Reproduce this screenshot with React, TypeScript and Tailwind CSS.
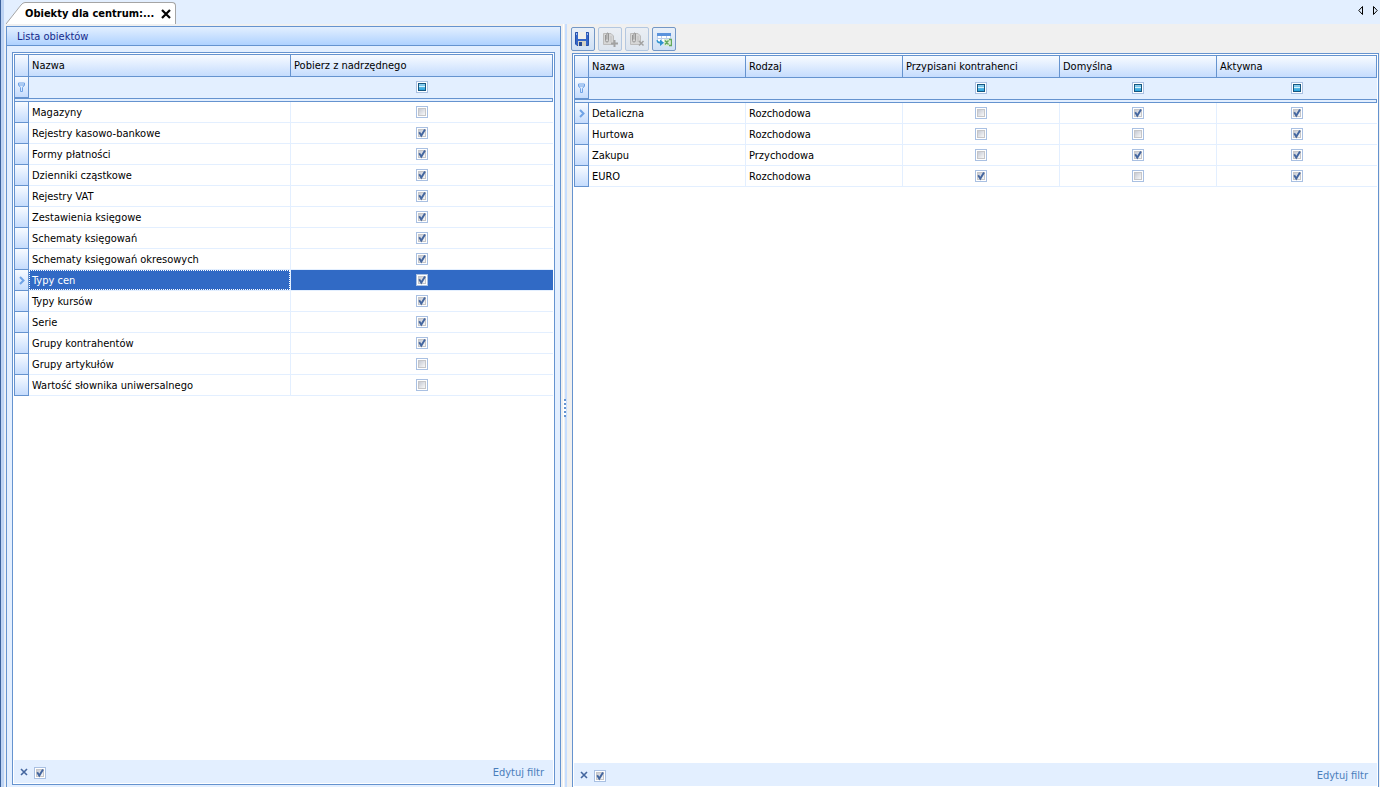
import React, { useState } from 'react';

type CellValue = string | boolean;

interface Column {
    title: string;
    width: string; // Tailwind width class, empty = share what is left
    filter?: boolean;
}

interface GridProps {
    name: string;
    columns: Column[];
    rows: CellValue[][];
    current: number;
    highlight?: boolean;
    className: string;
}

const OBJECT_COLUMNS: Column[] = [
    { title: 'Nazwa', width: '' },
    { title: 'Pobierz z nadrzędnego', width: '', filter: true },
];

const OBJECT_ROWS: CellValue[][] = [
    ['Magazyny', false],
    ['Rejestry kasowo-bankowe', true],
    ['Formy płatności', true],
    ['Dzienniki cząstkowe', true],
    ['Rejestry VAT', true],
    ['Zestawienia księgowe', true],
    ['Schematy księgowań', true],
    ['Schematy księgowań okresowych', true],
    ['Typy cen', true],
    ['Typy kursów', true],
    ['Serie', true],
    ['Grupy kontrahentów', true],
    ['Grupy artykułów', false],
    ['Wartość słownika uniwersalnego', false],
];

const PRICE_COLUMNS: Column[] = [
    { title: 'Nazwa', width: 'w-[157px]' },
    { title: 'Rodzaj', width: 'w-[157px]' },
    { title: 'Przypisani kontrahenci', width: 'w-[157px]', filter: true },
    { title: 'Domyślna', width: 'w-[157px]', filter: true },
    { title: 'Aktywna', width: '', filter: true },
];

const PRICE_ROWS: CellValue[][] = [
    ['Detaliczna', 'Rozchodowa', false, true, true],
    ['Hurtowa', 'Rozchodowa', false, false, true],
    ['Zakupu', 'Przychodowa', false, true, true],
    ['EURO', 'Rozchodowa', true, false, true],
];

const CheckBox: React.FC<{ label: string; initial?: boolean; mixed?: boolean }> = ({ label, initial = false, mixed = false }) => {
    const [checked, setChecked] = useState(initial);
    return (
        <span className="relative block size-3">
            <input
                type="checkbox"
                aria-label={label}
                checked={checked}
                onChange={e => setChecked(e.target.checked)}
                className="block size-3 appearance-none border border-[#a9c0e2] bg-white"
            />
            <svg viewBox="0 0 12 12" className="pointer-events-none absolute inset-0 size-3" shapeRendering="crispEdges">
                <defs>
                    <linearGradient id="boxFace" x1="0" y1="0" x2="1" y2="1">
                        <stop offset="0" stopColor="#c6cad4" />
                        <stop offset="1" stopColor="#f8f8f8" />
                    </linearGradient>
                    <linearGradient id="mixedFace" x1="0" y1="0" x2="0" y2="1">
                        <stop offset="0" stopColor="#8fd0f0" />
                        <stop offset="1" stopColor="#2aa4dc" />
                    </linearGradient>
                </defs>
                {mixed ? (
                    <>
                        <rect x="2" y="2" width="8" height="8" fill="#17567f" />
                        <rect x="3" y="3" width="6" height="6" fill="url(#mixedFace)" />
                        <rect x="3" y="5" width="6" height="1" fill="#d8f2fc" />
                    </>
                ) : (
                    <>
                        <rect x="2" y="2" width="8" height="8" fill="#c6c6c8" />
                        <rect x="3" y="3" width="6" height="6" fill="url(#boxFace)" />
                    </>
                )}
                {!mixed && checked && (
                    <path d="M3.2 5.2 L5.3 8.6 L9 2.6" fill="none" stroke="#44669f" strokeWidth="1.9" shapeRendering="auto" />
                )}
            </svg>
        </span>
    );
};

const Funnel = () => (
    <svg viewBox="0 0 9 10" className="mx-auto block h-[10px] w-[9px]" fill="none" stroke="#6fa3e6">
        <path d="M1.5 1 H7.5 V3 H1.5 Z M1.5 3 L3.5 5.5 V9.5 H5.5 V5.5 L7.5 3" />
    </svg>
);

const RowArrow = () => (
    <svg viewBox="0 0 6 9" className="mx-auto block h-[9px] w-[6px]" fill="none" stroke="#6fa3e6" strokeWidth="2">
        <path d="M1 1 L4.5 4.5 L1 8" />
    </svg>
);

const HEAD = 'border-[#6593cf] bg-linear-to-b from-[#f8fbff] to-[#c5dcfd]';

const Grid: React.FC<GridProps> = ({ name, columns, rows, current, highlight = false, className }) => (
    <section aria-label={name} className={`flex min-h-0 flex-1 flex-col border border-[#6593cf] bg-white p-px ${className}`}>
        <div className="min-h-0 flex-1">
            <table className="w-full table-fixed border-separate border-spacing-0">
                <thead>
                    <tr className="h-[23px]">
                        <th className={`w-[15px] border p-0 ${HEAD}`} />
                        {columns.map(c => (
                            <th key={c.title} className={`border-y border-r p-0 pl-[3px] text-left font-normal ${HEAD} ${c.width}`}>
                                {c.title}
                            </th>
                        ))}
                    </tr>
                    <tr className="h-[21px] bg-[#e3efff]">
                        <td className={`border-x border-b p-0 ${HEAD}`}><Funnel /></td>
                        {columns.map(c => (
                            <td key={c.title} className="border-r border-b border-[#e3efff] p-0">
                                {c.filter && <div className="flex justify-center"><CheckBox label={`Filtr: ${c.title}`} mixed /></div>}
                            </td>
                        ))}
                    </tr>
                    <tr className="h-1">
                        <td colSpan={columns.length + 1} className="border border-[#6593cf] bg-[#e3efff] p-0" />
                    </tr>
                </thead>
                <tbody>
                    {rows.map((row, r) => {
                        const active = highlight && r === current;
                        return (
                            <tr key={r} className={`h-[21px] ${active ? 'bg-[#316ac5] text-white' : ''}`}>
                                <td className={`border-x border-b p-0 ${HEAD}`}>{r === current && <RowArrow />}</td>
                                {row.map((value, i) => (
                                    <td
                                        key={i}
                                        className={`border-b border-[#e3efff] p-0 ${i < row.length - 1 ? 'border-r' : ''}`}
                                    >
                                        {typeof value === 'string'
                                            ? (
                                                <span className={`block h-5 truncate border border-dotted pt-0.5 pl-0.5 ${active ? 'border-white' : 'border-transparent'}`}>
                                                    {value}
                                                </span>
                                            )
                                            : <div className="flex justify-center"><CheckBox label={`${row[0]}: ${columns[i].title}`} initial={value} /></div>}
                                    </td>
                                ))}
                            </tr>
                        );
                    })}
                </tbody>
            </table>
        </div>
        <footer className="flex h-[23px] shrink-0 items-center bg-[#e3efff] pt-0.5 pr-[9px] pl-1.5 text-[#4a7ebb]">
            <button type="button" aria-label="Wyczyść filtr" className="mr-1.5 pb-0.5">
                <svg viewBox="0 0 8 8" className="block size-2" fill="none" stroke="#44669f" strokeWidth="1.6">
                    <path d="M1 1 L7 7 M7 1 L1 7" />
                </svg>
            </button>
            <CheckBox label="Filtr aktywny" initial />
            <a href="#" className="ml-auto">Edytuj filtr</a>
        </footer>
    </section>
);

const SaveIcon = () => (
    <svg viewBox="0 0 16 16" className="mr-0.5 size-4">
        <path d="M1.5 1.5 H14.5 V14.5 H3 L1.5 13 Z" fill="#3566c8" stroke="#2650a8" />
        <rect x="4" y="1" width="8" height="7" fill="#f1f0ea" />
        <rect x="4" y="10" width="8" height="5" fill="#d6d2c4" />
        <rect x="5" y="11" width="3" height="4" fill="#26488f" />
        <path d="M2.5 2 V4 M13.5 2 V4" stroke="#9cbcf0" />
    </svg>
);

const ClipIcon: React.FC<{ remove?: boolean }> = ({ remove = false }) => (
    <svg viewBox="0 0 16 16" className="size-4" fill="none">
        <path d="M1.5 2.5 H9 L11.5 5 V13.5 H1.5 Z" fill="#d6d6d6" stroke="#bcbcbc" />
        <path d="M8 6 H10 M8 8 H10 M8 10 H10" stroke="#c0c0c0" />
        <path d="M3.5 4 V9.5 A1.5 1.5 0 0 0 6.5 9.5 V2.5 A1 1 0 0 0 4.9 2.5 V8.5" stroke="#969696" />
        {remove
            ? <path d="M10 10 L14.5 14.5 M14.5 10 L10 14.5" stroke="#a2a2a2" strokeWidth="1.5" />
            : <path d="M12.5 9 V16 M9 12.5 H16" stroke="#a2a2a2" strokeWidth="2" />}
    </svg>
);

const ExportIcon = () => (
    <svg viewBox="0 0 16 16" className="size-4">
        <rect x="1" y="2" width="14" height="9" fill="#fff" />
        <path d="M1 7.5 H15 M5.5 4.5 V11 M10.5 4.5 V11 M1.5 4 V10 M14.5 4 V10" stroke="#bdd0ea" />
        <rect x="1" y="2" width="14" height="3" fill="#5b93dc" />
        <path d="M0.5 9 C0.5 11.5 2 12.5 4 12.5 V15 L8 11.7 L4 8.5 V10.5 C2.5 10.5 2 10 1.5 9 Z" fill="#2f93cf" />
        <rect x="8" y="8" width="8" height="7" fill="#d8ecd2" />
        <path d="M9 9.5 L12.5 13.5 M12.5 9.5 L9 13.5 M13 8.5 H15.5 V14.5 H13" fill="none" stroke="#63a85c" strokeWidth="1.3" />
    </svg>
);

const ToolButton: React.FC<{ label: string; disabled?: boolean; children: React.ReactNode }> = ({ label, disabled = false, children }) => (
    <button
        type="button"
        aria-label={label}
        disabled={disabled}
        className="flex size-6 items-center justify-center rounded-xs border border-[#7397c6] bg-linear-to-b from-[#e9f0f9] to-[#cfe0f5] disabled:border-[#b3c7e0] disabled:from-[#ebeff4] disabled:to-[#dde5ef]"
    >
        {children}
    </button>
);

export default function App() {
    return (
        <div className="flex h-screen overflow-hidden bg-[#f0f0f0] font-['DejaVu_Sans_Condensed','DejaVu_Sans',sans-serif] text-[11px] leading-4 text-black">
            <div className="w-[5px] shrink-0 border-r border-l border-r-[#e3efff] border-l-[#3b619c] bg-[#bdd3f3]" />
            <div className="flex min-w-0 flex-1 flex-col">
                <header className="flex h-6 shrink-0 items-end bg-[#e3efff]">
                    <svg viewBox="0 0 19 22" className="ml-px block h-[22px] w-[19px] shrink-0">
                        <path d="M0 22 L15 3 Q17 0.5 19 0.5 V22 Z" fill="#fff" />
                        <path d="M0 22 L15 3 Q17 0.5 19 0.5" fill="none" stroke="#a5a5a5" />
                    </svg>
                    <div className="flex h-[22px] w-[151px] items-center justify-between rounded-tr border-t border-r border-[#a5a5a5] bg-white pr-1">
                        <span className="font-bold whitespace-nowrap">Obiekty dla centrum:...</span>
                        <button type="button" aria-label="Zamknij">
                            <svg viewBox="0 0 10 10" className="block size-[10px]" stroke="#000" strokeWidth="2.2">
                                <path d="M1 1 L9 9 M9 1 L1 9" />
                            </svg>
                        </button>
                    </div>
                    <div className="mb-2 ml-auto flex gap-2 pr-0.5">
                        <button type="button" aria-label="Poprzednia karta">
                            <svg viewBox="0 0 6 11" className="block h-[11px] w-[6px]" fill="none" stroke="#000"><path d="M4.5 1.5 L0.8 5.5 L4.5 9.5 Z" /></svg>
                        </button>
                        <button type="button" aria-label="Następna karta">
                            <svg viewBox="0 0 6 11" className="block h-[11px] w-[6px]" fill="none" stroke="#000"><path d="M1.5 1.5 L5.2 5.5 L1.5 9.5 Z" /></svg>
                        </button>
                    </div>
                </header>

                <main className="flex min-h-0 flex-1">
                    <div className="mt-0.5 ml-px flex w-[555px] shrink-0 flex-col border-x border-t border-[#6593cf] bg-[#e3efff]">
                        <h1 className="h-[19px] shrink-0 border-b border-[#6593cf] bg-linear-to-b from-[#e3efff] to-[#afd2ff] pt-0.5 pl-2.5 text-[#152a8b]">
                            Lista obiektów
                        </h1>
                        <div className="flex min-h-0 flex-1 flex-col px-[5px] pt-1.5 pb-0.5">
                            <Grid name="Lista obiektów" columns={OBJECT_COLUMNS} rows={OBJECT_ROWS} current={8} highlight className="" />
                        </div>
                    </div>

                    <div className="flex w-[10px] shrink-0 pl-0.5">
                        <div className="flex h-full w-1 items-center border-r-2 border-l border-r-[#c7deff] border-l-white pt-1">
                            <div className="h-[18px] w-0.5 shrink-0 bg-[repeating-linear-gradient(#6593cf_0_2px,#ffffff_2px_4px)]" />
                        </div>
                    </div>

                    <div className="flex min-w-0 flex-1 flex-col">
                        <div className="flex h-[29px] shrink-0 gap-[3px] pt-[3px]">
                            <ToolButton label="Zapisz"><SaveIcon /></ToolButton>
                            <ToolButton label="Dołącz" disabled><ClipIcon /></ToolButton>
                            <ToolButton label="Odłącz" disabled><ClipIcon remove /></ToolButton>
                            <ToolButton label="Eksportuj do arkusza"><ExportIcon /></ToolButton>
                        </div>
                        <div className="flex min-h-0 flex-1 flex-col px-px">
                            <Grid name="Typy cen" columns={PRICE_COLUMNS} rows={PRICE_ROWS} current={0} className="border-b-0" />
                        </div>
                    </div>
                </main>
            </div>
        </div>
    );
}
